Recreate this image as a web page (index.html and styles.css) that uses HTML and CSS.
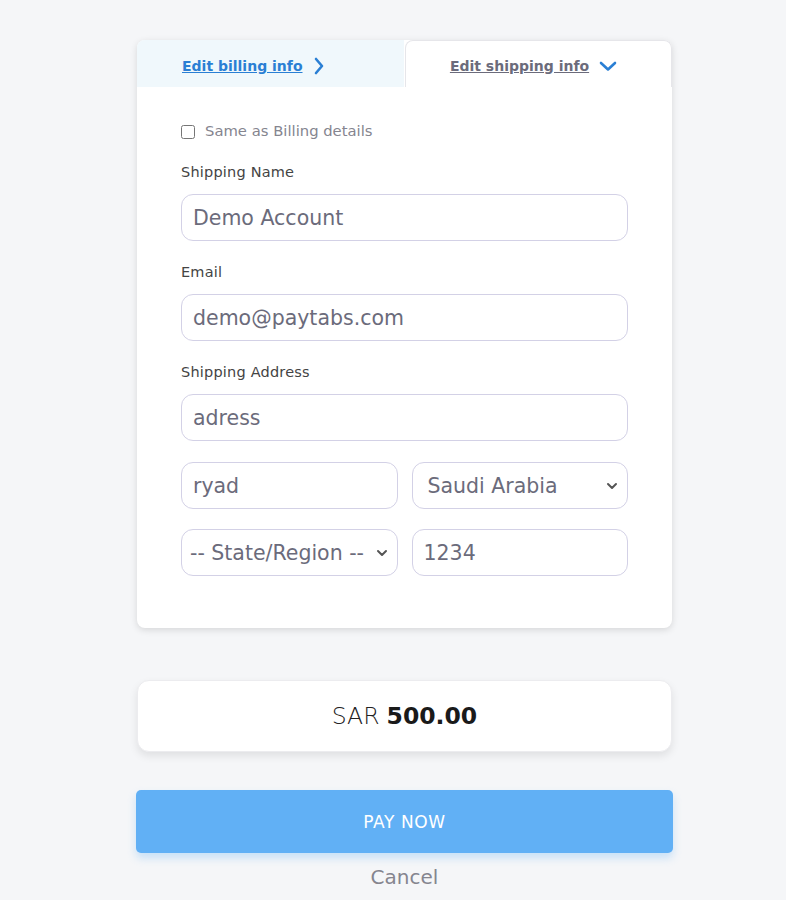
FILE: index.html
```html
<!DOCTYPE html>
<html lang="en">
<head>
    <meta charset="UTF-8">
    <meta name="viewport" content="width=device-width, initial-scale=1.0">
    <title>Payment</title>
    <link rel="stylesheet" href="styles.css">
</head>
<body>
    <div class="wrap">
        <div class="card">
            <div class="tabs">
                <div class="tab tab-billing">
                    <a href="#">Edit billing info</a>
                    <svg width="12" height="18" viewBox="0 0 12 18"><path d="M3 2 L9 9 L3 16" fill="none" stroke="#2a7fd4" stroke-width="2.6" stroke-linecap="round" stroke-linejoin="round"/></svg>
                </div>
                <div class="tab tab-shipping">
                    <a href="#">Edit shipping info</a>
                    <svg width="18" height="12" viewBox="0 0 18 12"><path d="M2 3 L9 9.5 L16 3" fill="none" stroke="#2a7fd4" stroke-width="2.6" stroke-linecap="round" stroke-linejoin="round"/></svg>
                </div>
            </div>

            <form class="form">
                <label class="check">
                    <input type="checkbox">
                    <span>Same as Billing details</span>
                </label>

                <label class="field-label" for="ship_name">Shipping Name</label>
                <input class="field" type="text" id="ship_name" value="Demo Account">

                <label class="field-label" for="ship_email">Email</label>
                <input class="field" type="text" id="ship_email" value="demo@paytabs.com">

                <label class="field-label" for="ship_addr">Shipping Address</label>
                <input class="field field-last" type="text" id="ship_addr" value="adress">

                <div class="row">
                    <input class="field" type="text" value="ryad">
                    <div class="select">
                        <span>Saudi Arabia</span>
                        <svg width="12" height="8" viewBox="0 0 12 8"><path d="M2 2 L6 6 L10 2" fill="none" stroke="#555" stroke-width="2" stroke-linecap="round" stroke-linejoin="round"/></svg>
                    </div>
                </div>
                <div class="row">
                    <div class="select select-state">
                        <span>-- State/Region --</span>
                        <svg width="12" height="8" viewBox="0 0 12 8"><path d="M2 2 L6 6 L10 2" fill="none" stroke="#555" stroke-width="2" stroke-linecap="round" stroke-linejoin="round"/></svg>
                    </div>
                    <input class="field" type="text" value="1234">
                </div>
            </form>
        </div>

        <div class="amount">SAR <b>500.00</b></div>

        <button class="pay" type="button">PAY NOW</button>
        <div class="cancel">Cancel</div>
    </div>
</body>
</html>
```

FILE: styles.css
```css
body {
    margin: 0;
    background: #f5f6f8;
    font-family: 'DejaVu Sans', 'Open Sans', sans-serif;
    color: #333;
}

.wrap {
    width: 535px;
    margin: 0 0 0 137px;
    padding-top: 40px;
}

.card {
    background: #fff;
    border-radius: 8px;
    box-shadow: 0 2px 7px rgba(0, 0, 0, 0.13);
}

.tabs {
    display: flex;
    height: 47px;
}

.tab {
    box-sizing: border-box;
    width: 50%;
    display: flex;
    align-items: center;
    gap: 10px;
    padding-top: 5px;
}

.tab a {
    font-size: 14px;
    font-weight: bold;
    text-decoration: underline;
}

.tab-billing {
    background: #f0f8fc;
    border-top-left-radius: 8px;
    padding-left: 45px;
}

.tab-billing a {
    color: #2a7fd4;
}

.tab-shipping {
    justify-content: center;
    padding-top: 3px;
    padding-right: 10px;
    border: 1px solid #e6e6ea;
    border-bottom: none;
    border-radius: 8px 8px 0 0;
    margin-left: 1px;
}

.tab-shipping a {
    color: #6b6b7b;
}

.form {
    padding: 36px 44px 52px;
    display: flex;
    flex-direction: column;
}

.check {
    display: flex;
    align-items: center;
    gap: 10px;
    font-size: 14.8px;
    line-height: 16px;
    color: #85858f;
    margin-bottom: 25px;
}

.check input {
    width: 14px;
    height: 14px;
    margin: 1px 0 0;
}

.field-label {
    font-size: 14.5px;
    line-height: 17px;
    letter-spacing: 0.2px;
    color: #444;
    margin-bottom: 13px;
}

.field {
    box-sizing: border-box;
    height: 47px;
    width: 100%;
    border: 1px solid #d3d1e6;
    border-radius: 12px;
    padding: 0 11px;
    font-family: inherit;
    font-size: 20.5px;
    color: #6b6b7b;
    margin: 0 0 23px;
    outline: none;
}

.field-last {
    margin-bottom: 21px;
}

.row {
    display: grid;
    grid-template-columns: 1fr 1fr;
    gap: 14px;
}

.row .field {
    margin-bottom: 20px;
}

.row:last-child .field {
    margin-bottom: 0;
}

.select {
    box-sizing: border-box;
    height: 47px;
    border: 1px solid #d3d1e6;
    border-radius: 12px;
    padding: 0 9px 0 15px;
    display: flex;
    align-items: center;
    justify-content: space-between;
    font-size: 20.5px;
    color: #6b6b7b;
}

.select-state {
    padding-left: 8px;
}

.amount {
    margin-top: 52px;
    height: 72px;
    background: #fff;
    border-radius: 12px;
    border: 1px solid #ececef;
    box-sizing: border-box;
    box-shadow: 0 4px 8px rgba(0, 0, 0, 0.09);
    display: flex;
    align-items: center;
    justify-content: center;
    gap: 7px;
    font-size: 23.5px;
    font-weight: 300;
    color: #222;
}

.amount b {
    font-weight: bold;
    color: #1a1a1a;
}

.pay {
    display: block;
    width: 537px;
    margin: 38px 0 0 -1px;
    height: 63px;
    border: none;
    border-radius: 5px;
    background: #61b0f5;
    color: #fff;
    font-family: inherit;
    font-size: 17px;
    letter-spacing: 0.6px;
    box-shadow: 0 5px 8px rgba(97, 176, 245, 0.3);
}

.cancel {
    text-align: center;
    font-size: 20px;
    color: #85858f;
    margin-top: 12px;
}
```
